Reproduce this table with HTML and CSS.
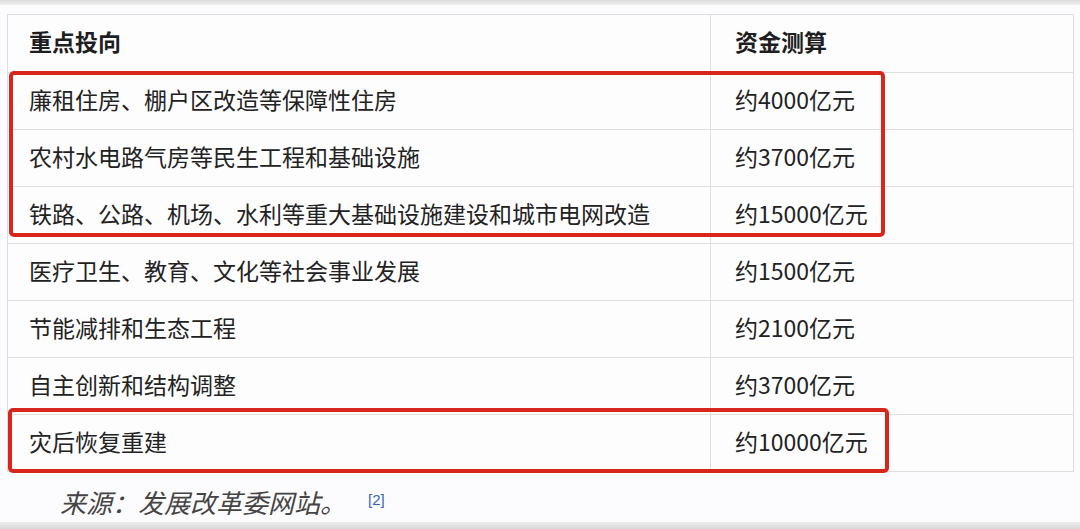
FILE: index.html
```html
<!DOCTYPE html>
<html lang="zh-CN">
<head>
  <meta charset="UTF-8">
  <title>重点投向与资金测算</title>
  <link rel="stylesheet" href="styles.css">
</head>
<body>
  <div class="topbar"></div>

  <div class="wrap">
    <table class="invest">
      <thead>
        <tr>
          <th class="col-main">重点投向</th>
          <th>资金测算</th>
        </tr>
      </thead>
      <tbody>
        <tr><td>廉租住房、棚户区改造等保障性住房</td><td>约4000亿元</td></tr>
        <tr><td>农村水电路气房等民生工程和基础设施</td><td>约3700亿元</td></tr>
        <tr><td>铁路、公路、机场、水利等重大基础设施建设和城市电网改造</td><td>约15000亿元</td></tr>
        <tr><td>医疗卫生、教育、文化等社会事业发展</td><td>约1500亿元</td></tr>
        <tr><td>节能减排和生态工程</td><td>约2100亿元</td></tr>
        <tr><td>自主创新和结构调整</td><td>约3700亿元</td></tr>
        <tr><td>灾后恢复重建</td><td>约10000亿元</td></tr>
      </tbody>
    </table>

    <!-- red highlight boxes drawn over the table -->
    <div class="mark mark-top"></div>
    <div class="mark mark-bottom"></div>
  </div>

  <p class="source">来源：发展改革委网站。<sup class="ref">[2]</sup></p>

  <div class="bottombar"></div>
</body>
</html>
```

FILE: styles.css
```css
body {
  margin: 0;
  height: 529px;
  overflow: hidden;
  font-family: "Noto Sans CJK SC", "Noto Sans", sans-serif;
  background-color: #fcfcfe;
  color: #222;
}

.topbar {
  height: 5px;
  background: linear-gradient(#dcdcdc, #efefef);
}

.wrap {
  position: relative;
  margin: 9px 6px 0 7px;
}

.invest {
  width: 1067px;
  border-collapse: collapse;
  background: #fdfdfe;
}

.invest th,
.invest td {
  border: 1px solid #dedede;
  padding: 0 0 4px 21px;
  text-align: left;
  font-size: 23px;
  line-height: 30px;
  white-space: nowrap;
}

.invest th {
  height: 51px;
  padding-bottom: 6px;
  font-weight: bold;
  color: #1e1e1e;
}

.invest td {
  height: 52px;
  font-weight: normal;
}

.invest .col-main {
  width: 681px;
}

.invest td:nth-child(2),
.invest th:nth-child(2) {
  padding-left: 24px;
}

.mark {
  position: absolute;
  border: 4px solid #d8261c;
  border-radius: 5px;
  box-sizing: border-box;
}

.mark-top {
  left: 2px;
  top: 57px;
  width: 876px;
  height: 166px;
}

.mark-bottom {
  left: 1px;
  top: 394px;
  width: 881px;
  height: 65px;
}

.source {
  margin: 12px 0 0 60px;
  font-size: 26px;
  line-height: 32px;
  font-style: italic;
  color: #444;
}

.ref {
  margin-left: 22px;
  font-size: 15px;
  font-style: normal;
  font-family: "Liberation Sans", sans-serif;
  color: #3366bb;
  vertical-align: 8px;
}

.bottombar {
  position: absolute;
  left: 0;
  right: 0;
  bottom: 0;
  height: 7px;
  background: linear-gradient(#ececec, #d8d8d8);
}
```
